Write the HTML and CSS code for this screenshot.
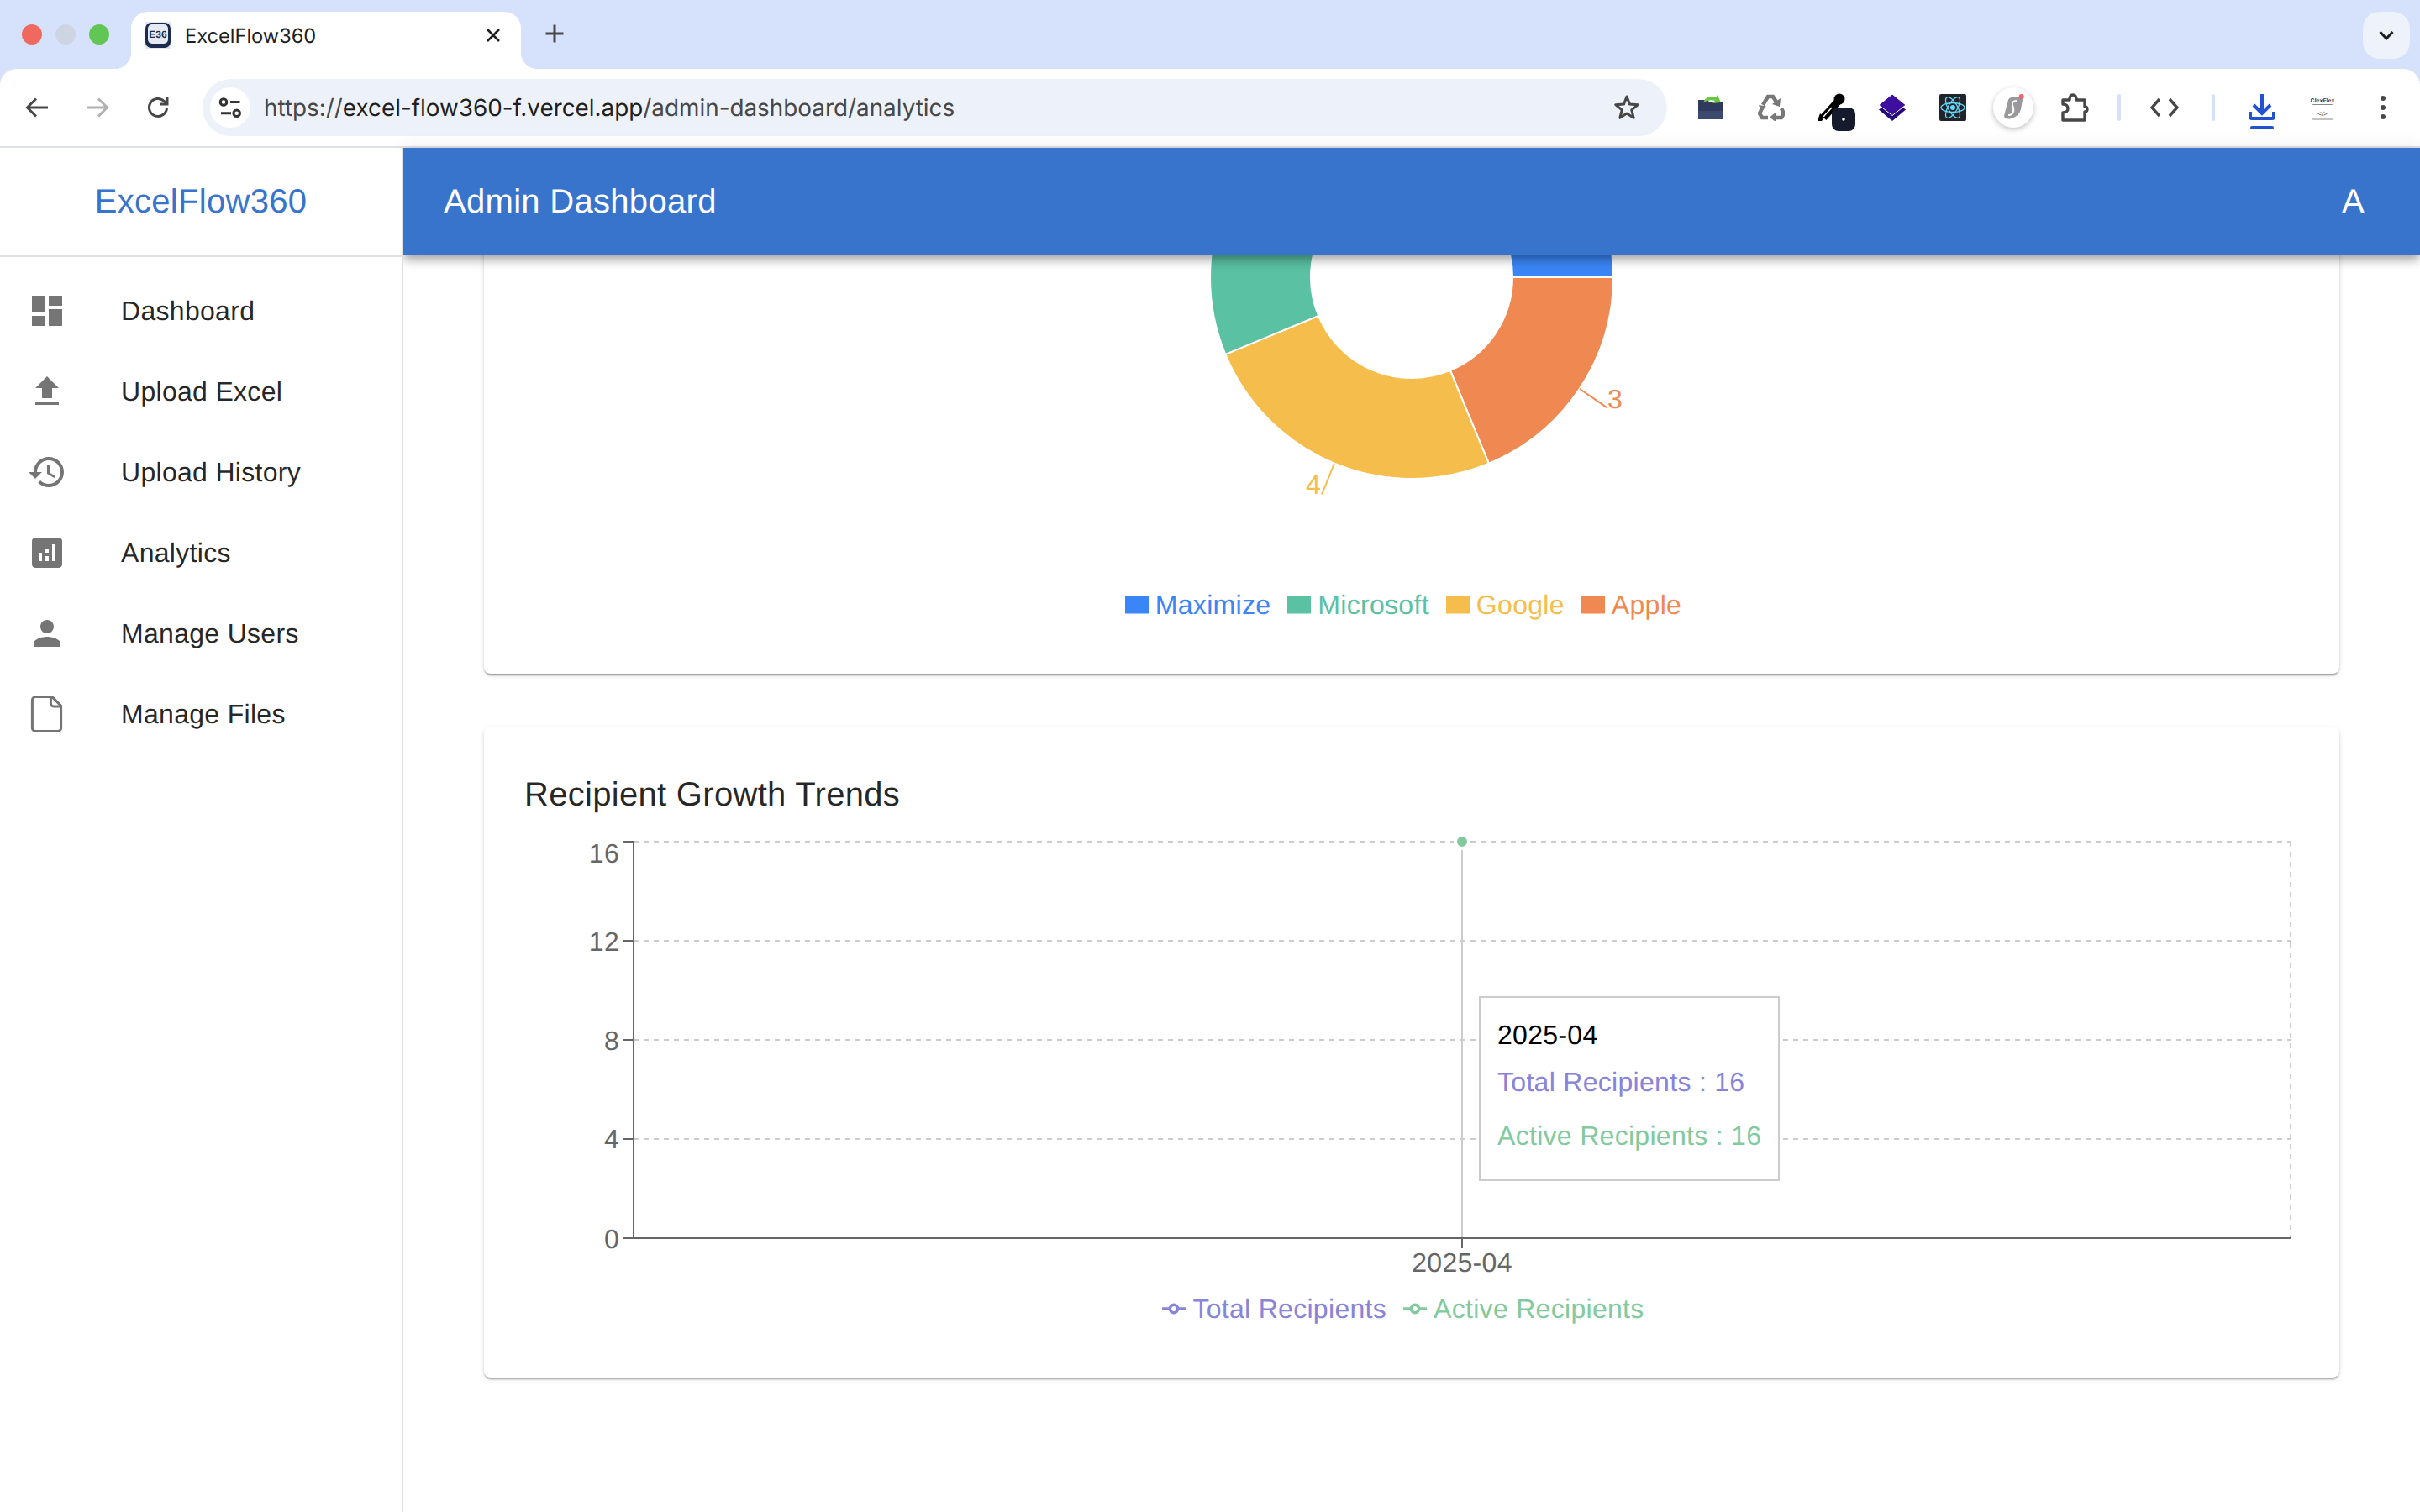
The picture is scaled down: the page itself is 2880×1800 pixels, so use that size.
FILE: index.html
```html
<!DOCTYPE html>
<html>
<head>
  <title>ExcelFlow360</title>
  <link rel="stylesheet" href="styles.css">
</head>
<body>
  <!-- browser frame -->
  <div class="browser">
    <div class="tabstrip">
      <div class="lights">
        <span class="light light-red"></span>
        <span class="light light-grey"></span>
        <span class="light light-green"></span>
      </div>
      <div class="tab">
        <svg class="favicon" width="32" height="32" viewBox="0 0 32 32">
          <rect width="32" height="32" fill="#e4e8ee"/>
          <rect x="1" y="1" width="30" height="30" rx="7" fill="#1d2b4f"/>
          <rect x="4" y="3" width="24" height="23" rx="5" fill="#e6ebf3"/>
          <text x="16" y="19" text-anchor="middle" class="favicon-text">E36</text>
        </svg>
        <span class="tab-title">ExcelFlow360</span>
        <svg class="tab-close" width="18" height="18" viewBox="0 0 18 18"><path d="M2 2 16 16M16 2 2 16" stroke="#1f1f1f" stroke-width="2.6" fill="none"/></svg>
      </div>
      <svg class="new-tab" width="24" height="24" viewBox="0 0 24 24"><path d="M12 1.500v21M1.500 12h21" stroke="#474747" stroke-width="3" fill="none"/></svg>
      <div class="tab-menu">
        <svg width="18" height="12" viewBox="0 0 18 12"><path d="M1.500 2 9 10l7.500-8" stroke="#1f1f1f" stroke-width="3" fill="none"/></svg>
      </div>
    </div>

    <div class="toolbar">
      <div class="slot">
        <svg width="32" height="32" viewBox="0 0 32 32"><path d="M29 16H5M15 5.500 4.500 16 15 26.500" stroke="#474747" stroke-width="3" fill="none"/></svg>
      </div>
      <div class="slot">
        <svg width="32" height="32" viewBox="0 0 32 32"><path d="M3 16h24M17 5.500 27.500 16 17 26.500" stroke="#b1b1b1" stroke-width="3" fill="none"/></svg>
      </div>
      <div class="slot">
        <svg width="32" height="32" viewBox="0 0 32 32"><path d="M26.500 16a10.500 10.500 0 1 1-3.100-7.500l3.600 3.500M27 4v8h-8" stroke="#474747" stroke-width="3" fill="none"/></svg>
      </div>

      <div class="omnibox">
        <div class="site-info">
          <svg width="48" height="48" viewBox="0 0 48 48">
            <circle cx="16" cy="17.500" r="3.800" fill="none" stroke="#333" stroke-width="3"/>
            <path d="M24 17.500h11.500M13 30.700h12" stroke="#333" stroke-width="3" fill="none"/>
            <circle cx="31.700" cy="30.700" r="3.800" fill="none" stroke="#333" stroke-width="3"/>
          </svg>
        </div>
        <div class="url"><span class="url-soft">https://</span>excel-flow360-f.vercel.app<span class="url-soft">/admin-dashboard/analytics</span></div>
        <svg class="star" width="32" height="32" viewBox="0 0 32 32"><path d="M16 3l3.500 9.100 9.800.6-7.600 6.200 2.500 9.400L16 23l-8.200 5.300 2.500-9.400-7.600-6.200 9.800-.6z" stroke="#474747" stroke-width="3" fill="none" stroke-linejoin="round"/></svg>
      </div>

      <div class="slot">
        <svg width="32" height="32" viewBox="0 0 32 32">
          <path d="M1 7h11l3 3h16v20H1z" fill="#2f3a5e"/>
          <path d="M1 20h30v10H1z" fill="#3d4a70"/>
          <path d="M7 10c2-6 9-9 15-6l2-3 4 9-10 1 3-3c-5-2-9 0-14 2z" fill="#6cc644"/>
        </svg>
      </div>
      <div class="slot">
        <svg class="blurred" width="32" height="32" viewBox="0 0 32 32">
          <path d="M6 13 12 3h6l5 8M28 17l3 6-3 5h-8M12 28H5l-3-5 4-8" stroke="#777" stroke-width="4.500" fill="none"/>
          <path d="M27 5l-1 10-9-3zM21 22v11l-7-5.500zM1 13l9 1.500L4 21z" fill="#777"/>
        </svg>
      </div>
      <div class="slot">
        <svg class="slot-tall" width="72" height="56" viewBox="0 0 72 56">
          <path d="M26 40 44 20" stroke="#000" stroke-width="9" fill="none"/>
          <path d="M26 39 36 28" stroke="#fff" stroke-width="1.500" fill="none"/>
          <path d="M22 35l5 5-3 4h-5z" fill="#000"/>
          <circle cx="45" cy="18" r="6.500" fill="#000"/>
          <rect x="36" y="28" width="28" height="28" rx="8" fill="#141b2d"/>
          <circle cx="50" cy="42" r="1.800" fill="#fff"/>
        </svg>
      </div>
      <div class="slot">
        <svg width="32" height="32" viewBox="0 0 32 32">
          <path d="M0 18.500 16 32l16-13.500L16 6z" fill="#230a78"/>
          <path d="M16 0l16 13-16 12.500L0 13z" fill="#3e0e9e" stroke="#fff" stroke-width="1"/>
        </svg>
      </div>
      <div class="slot">
        <svg width="32" height="32" viewBox="0 0 32 32">
          <rect width="32" height="32" rx="2" fill="#20232a"/>
          <g fill="none" stroke="#61dafb" stroke-width="1.300">
            <ellipse cx="16" cy="16" rx="14" ry="5.500"/>
            <ellipse cx="16" cy="16" rx="14" ry="5.500" transform="rotate(60 16 16)"/>
            <ellipse cx="16" cy="16" rx="14" ry="5.500" transform="rotate(120 16 16)"/>
          </g>
          <circle cx="16" cy="16" r="3" fill="#61dafb"/>
        </svg>
      </div>
      <div class="slot">
        <div class="pinned">
          <svg width="48" height="48" viewBox="0 0 48 48">
            <path d="M18 15q1-3 5-3h10q2 0 2 3l-2 11q-2 8-11 11-8 2-9-3z" fill="#98989d"/>
            <path d="M28 16q-6 0-5 5 2 5 1 8-1 4-6 4" stroke="#fff" stroke-width="2" fill="none"/>
            <circle cx="33.700" cy="11" r="3" fill="#f1606a"/>
          </svg>
        </div>
      </div>
      <div class="slot">
        <svg width="36" height="36" viewBox="0 0 36 36">
          <path d="M5 9h8q0-6 4-6t4 6h10v8q3 0 3 3t-3 3v10H5v-9q6 0 6-5t-6-5z" stroke="#474747" stroke-width="3.400" fill="none" stroke-linejoin="round"/>
        </svg>
      </div>
      <span class="sep"></span>
      <div class="slot">
        <svg width="34" height="24" viewBox="0 0 34 24"><path d="M11 2 2 12l9 10M23 2l9 10-9 10" stroke="#474747" stroke-width="3.400" fill="none"/></svg>
      </div>
      <span class="sep sep-wide"></span>
      <div class="slot">
        <svg class="slot-tall" width="32" height="56" viewBox="0 0 32 56">
          <path d="M16 12v22M6 25l10 10 10-10M2 33v6q0 2 2 2h24q2 0 2-2v-6" stroke="#2352d0" stroke-width="4" fill="none"/>
          <rect x="2" y="50" width="28" height="4" rx="2" fill="#2352d0"/>
        </svg>
      </div>
      <div class="slot">
        <svg width="28" height="32" viewBox="0 0 28 32">
          <text x="14" y="10" text-anchor="middle" class="clex-title">ClexFlex</text>
          <rect x="1.500" y="12.500" width="25" height="17.500" rx="1" fill="#fff" stroke="#888"/>
          <path d="M2 16.500h24" stroke="#888"/>
          <text x="14" y="26" text-anchor="middle" class="clex-code">&lt;/&gt;</text>
        </svg>
      </div>
      <div class="slot">
        <svg width="8" height="32" viewBox="0 0 8 32">
          <circle cx="4" cy="5" r="3" fill="#474747"/>
          <circle cx="4" cy="16" r="3" fill="#474747"/>
          <circle cx="4" cy="27" r="3" fill="#474747"/>
        </svg>
      </div>
    </div>
  </div>

  <div class="app">
    <div class="sidebar">
      <div class="logo">ExcelFlow360</div>
      <ul class="nav">
        <li class="nav-item">
          <span class="nav-icon"><svg width="48" height="48" viewBox="0 0 24 24"><path d="M3 13h8V3H3v10zm0 8h8v-6H3v6zm10 0h8V11h-8v10zm0-18v6h8V3h-8z"/></svg></span>
          Dashboard
        </li>
        <li class="nav-item">
          <span class="nav-icon"><svg width="48" height="48" viewBox="0 0 24 24"><path d="M5 20h14v-2H5v2zm0-10h4v6h6v-6h4l-7-7-7 7z"/></svg></span>
          Upload Excel
        </li>
        <li class="nav-item">
          <span class="nav-icon"><svg width="48" height="48" viewBox="0 0 24 24"><path d="M13 3c-4.970 0-9 4.030-9 9H1l3.890 3.890.07.14L9 12H6c0-3.870 3.130-7 7-7s7 3.130 7 7-3.130 7-7 7c-1.930 0-3.680-.79-4.940-2.060l-1.420 1.420C8.270 19.990 10.510 21 13 21c4.970 0 9-4.030 9-9s-4.030-9-9-9zm-1 5v5l4.280 2.540.72-1.210-3.500-2.080V8H12z"/></svg></span>
          Upload History
        </li>
        <li class="nav-item">
          <span class="nav-icon"><svg width="48" height="48" viewBox="0 0 24 24"><path d="M19 3H5c-1.100 0-2 .9-2 2v14c0 1.100.9 2 2 2h14c1.100 0 2-.9 2-2V5c0-1.100-.9-2-2-2zM9 17H7v-5h2v5zm4 0h-2v-3h2v3zm0-5h-2v-2h2v2zm4 5h-2V7h2v10z"/></svg></span>
          Analytics
        </li>
        <li class="nav-item">
          <span class="nav-icon"><svg width="48" height="48" viewBox="0 0 24 24"><path d="M12 12c2.210 0 4-1.790 4-4s-1.790-4-4-4-4 1.790-4 4 1.790 4 4 4zm0 2c-2.670 0-8 1.340-8 4v2h16v-2c0-2.660-5.330-4-8-4z"/></svg></span>
          Manage Users
        </li>
        <li class="nav-item">
          <span class="nav-icon"><svg width="48" height="48" viewBox="0 0 24 24"><path class="file-line" d="M5.200 1.800h9.800l5.300 5.300v13.100a2 2 0 0 1-2 2H5.200a2 2 0 0 1-2-2V3.800a2 2 0 0 1 2-2z"/><path class="file-line" d="M14.200 2v3.800a1.700 1.700 0 0 0 1.700 1.700h4.200"/></svg></span>
          Manage Files
        </li>
      </ul>
    </div>

    <div class="content">
      <div class="appbar">
        <span class="appbar-title">Admin Dashboard</span>
        <span class="appbar-title">A</span>
      </div>

      <div class="scroll">
        <div class="scroll-inner">
          <div class="card">
            <div class="chart">
              <svg width="2112" height="800" viewBox="0 0 2112 800">
                <g stroke="#fff" stroke-width="2">
                  <path fill="#f08951" d="M1296 376A240 240 0 0 1 1147.800 597.700L1101.900 486.900A120 120 0 0 0 1176 376Z"/>
                  <path fill="#f5bd4b" d="M1147.800 597.700A240 240 0 0 1 834.300 467.800L945.100 421.900A120 120 0 0 0 1101.900 486.900Z"/>
                  <path fill="#5ac1a3" d="M834.300 467.800A240 240 0 0 1 1056 136L1056 256A120 120 0 0 0 945.100 421.900Z"/>
                  <path fill="#3b86f6" d="M1056 136A240 240 0 0 1 1296 376L1176 376A120 120 0 0 0 1056 256Z"/>
                </g>
                <path d="M1256 509 1289 531.600" stroke="#f08951" stroke-width="2" fill="none"/>
                <text x="1289" y="532" class="pie-label" fill="#f08951">3</text>
                <path d="M964 597.700 949 634.700" stroke="#f5bd4b" stroke-width="2" fill="none"/>
                <text x="948" y="634" text-anchor="end" class="pie-label" fill="#f5bd4b">4</text>
              </svg>
              <div class="legend">
                <div class="legend-item legend-blue"><svg class="legend-icon" viewBox="0 0 32 32"><path d="M0 4h32v24H0z" fill="currentColor"/></svg>Maximize</div>
                <div class="legend-item legend-teal"><svg class="legend-icon" viewBox="0 0 32 32"><path d="M0 4h32v24H0z" fill="currentColor"/></svg>Microsoft</div>
                <div class="legend-item legend-yellow"><svg class="legend-icon" viewBox="0 0 32 32"><path d="M0 4h32v24H0z" fill="currentColor"/></svg>Google</div>
                <div class="legend-item legend-orange"><svg class="legend-icon" viewBox="0 0 32 32"><path d="M0 4h32v24H0z" fill="currentColor"/></svg>Apple</div>
              </div>
            </div>
          </div>

          <div class="card">
            <h6 class="card-title">Recipient Growth Trends</h6>
            <div class="chart">
              <svg width="2112" height="600" viewBox="0 0 2112 600" class="chart-trends">
                <g stroke="#ccc" stroke-width="2" stroke-dasharray="6 6" fill="none">
                  <path d="M130 10H2102"/>
                  <path d="M130 128H2102"/>
                  <path d="M130 246H2102"/>
                  <path d="M130 364H2102"/>
                  <path d="M2102 10V482"/>
                </g>
                <path d="M1116 10V482" stroke="#ccc" stroke-width="2"/>
                <g stroke="#666" stroke-width="2" fill="none">
                  <path d="M118 10H130V482H2102"/>
                  <path d="M118 128H130M118 246H130M118 364H130M118 482H130"/>
                  <path d="M1116 482V494"/>
                </g>
                <g class="tick" text-anchor="end">
                  <text x="113" y="35">16</text>
                  <text x="113" y="139.500">12</text>
                  <text x="113" y="258">8</text>
                  <text x="113" y="375">4</text>
                  <text x="113" y="493.500">0</text>
                </g>
                <text x="1116" y="521.500" text-anchor="middle" class="tick">2025-04</text>
                <circle cx="1116" cy="10" r="8" fill="#82ca9d" stroke="#fff" stroke-width="4"/>
              </svg>
              <div class="legend">
                <div class="legend-item legend-purple"><svg class="legend-icon" viewBox="0 0 32 32"><path d="M0 16h10.670A5.330 5.330 0 1 1 21.330 16H32M21.330 16A5.330 5.330 0 1 1 10.670 16" fill="none" stroke="currentColor" stroke-width="4"/></svg>Total Recipients</div>
                <div class="legend-item legend-green"><svg class="legend-icon" viewBox="0 0 32 32"><path d="M0 16h10.670A5.330 5.330 0 1 1 21.330 16H32M21.330 16A5.330 5.330 0 1 1 10.670 16" fill="none" stroke="currentColor" stroke-width="4"/></svg>Active Recipients</div>
              </div>
              <div class="tooltip">
                <p class="tooltip-label">2025-04</p>
                <p class="tooltip-row legend-purple">Total Recipients : 16</p>
                <p class="tooltip-row legend-green">Active Recipients : 16</p>
              </div>
            </div>
          </div>
        </div>
      </div>
    </div>
  </div>
</body>
</html>
```

FILE: styles.css
```css
* {
  box-sizing: border-box;
}

html, body {
  margin: 0;
  height: 1800px;
  overflow: hidden;
  background: #fff;
  font-family: "Liberation Sans", Arial, sans-serif;
  text-rendering: geometricPrecision;
}

svg {
  display: block;
  flex: none;
}

/* browser frame */
.browser {
  background: #d6e2fb;
  font-family: Inter, "Liberation Sans", sans-serif;
}

.tabstrip {
  height: 82px;
  display: flex;
  align-items: flex-end;
}

.lights {
  display: flex;
  gap: 16px;
  margin-left: 26px;
  align-self: flex-start;
  margin-top: 29px;
}

.light {
  width: 24px;
  height: 24px;
  border-radius: 50%;
}

.light-red { background: #f0695f; }
.light-grey { background: #ced5e2; }
.light-green { background: #62c655; }

.tab {
  position: relative;
  width: 464px;
  height: 68px;
  margin-left: 26px;
  padding: 0 24px 12px 16px;
  display: flex;
  align-items: center;
  background: #fff;
  border-radius: 20px 20px 0 0;
}

.tab::before,
.tab::after {
  content: "";
  position: absolute;
  bottom: 0;
  width: 20px;
  height: 20px;
}

.tab::before {
  left: -20px;
  background: radial-gradient(circle at 0 0, transparent 20px, #fff 20.5px);
}

.tab::after {
  right: -20px;
  background: radial-gradient(circle at 100% 0, transparent 20px, #fff 20.5px);
}

.favicon-text {
  font: bold 12px "Liberation Sans", sans-serif;
  fill: #1d2b4f;
}

.tab-title {
  margin-left: 16px;
  font-size: 23.6px;
  color: #1f1f1f;
}

.tab-close {
  margin-left: auto;
}

.new-tab {
  margin: 0 0 30px 28px;
}

.tab-menu {
  width: 56px;
  height: 56px;
  margin: 0 12px 12px auto;
  border-radius: 20px;
  background: #edf2fb;
  display: flex;
  align-items: center;
  justify-content: center;
}

.toolbar {
  height: 94px;
  padding: 0 8px;
  display: flex;
  align-items: center;
  background: #fff;
  border-radius: 20px 20px 0 0;
  border-bottom: 2px solid #dfe3e8;
}

.slot {
  width: 72px;
  height: 72px;
  flex: none;
  display: flex;
  align-items: center;
  justify-content: center;
}

.blurred {
  filter: blur(0.6px);
}

.pinned {
  width: 48px;
  height: 48px;
  border-radius: 50%;
  background: #fff;
  box-shadow: 0 2px 6px rgba(0, 0, 0, .25);
}

.omnibox {
  flex: 1;
  height: 68px;
  margin: 0 16px 0 17px;
  padding: 0 32px 0 9px;
  display: flex;
  align-items: center;
  border-radius: 34px;
  background: #edf2fa;
}

.site-info {
  width: 48px;
  height: 48px;
  border-radius: 50%;
  background: #fff;
}

.url {
  margin-left: 16px;
  font-size: 27.85px;
  color: #1f1f1f;
  white-space: nowrap;
}

.url-soft {
  color: #474747;
}

.star {
  margin-left: auto;
}

.sep {
  width: 4px;
  height: 32px;
  margin: 0 16px;
  flex: none;
  border-radius: 2px;
  background: #d6e2fb;
}

.sep-wide {
  margin: 0 20px;
}

.clex-title {
  font: bold 7px "Liberation Sans", sans-serif;
  fill: #333;
}

.clex-code {
  font: 8px "Liberation Sans", sans-serif;
  fill: #555;
}

/* app */
.app {
  display: flex;
  height: 1624px;
  letter-spacing: .3px;
}

.sidebar {
  position: relative;
  z-index: 2;
  width: 480px;
  flex: none;
  background: #fff;
  border-right: 2px solid #e0e0e0;
}

.logo {
  height: 130px;
  display: flex;
  align-items: center;
  justify-content: center;
  border-bottom: 2px solid #e0e0e0;
  font-size: 40px;
  color: #3874cb;
}

.nav {
  list-style: none;
  margin: 0;
  padding: 16px 0;
}

.nav-item {
  height: 96px;
  padding-left: 32px;
  display: flex;
  align-items: center;
  font-size: 32px;
  color: rgba(0, 0, 0, .87);
}

.nav-icon {
  width: 112px;
  flex: none;
  fill: #757575;
}

.nav-icon .file-line {
  fill: none;
  stroke: #757575;
  stroke-width: 1.5;
}

.content {
  flex: 1;
  min-width: 0;
}

.appbar {
  position: relative;
  z-index: 1;
  height: 128px;
  padding: 0 66px 0 48px;
  display: flex;
  align-items: center;
  justify-content: space-between;
  background: #3874cb;
  box-shadow: 0 4px 8px -2px rgba(0, 0, 0, .2), 0 8px 10px 0 rgba(0, 0, 0, .14), 0 2px 20px 0 rgba(0, 0, 0, .12);
}

.appbar-title {
  font-size: 40px;
  color: #fff;
}

.scroll {
  height: 1496px;
  overflow: hidden;
}

/* the page is scrolled down, so the first card starts above the bar */
.scroll-inner {
  margin-top: -398px;
  padding: 0 96px;
}

.card {
  padding: 48px;
  margin-bottom: 64px;
  background: #fff;
  border-radius: 8px;
  box-shadow: 0 4px 2px -2px rgba(0, 0, 0, .2), 0 2px 2px 0 rgba(0, 0, 0, .14), 0 2px 6px 0 rgba(0, 0, 0, .12);
}

.card-title {
  margin: 0;
  font-size: 40px;
  font-weight: 400;
  line-height: 64px;
  color: rgba(0, 0, 0, .87);
}

.chart {
  position: relative;
}

.chart-trends {
  margin-top: 14px;
}

.pie-label {
  font-size: 32px;
}

.tick,
.tick text {
  font-size: 32px;
  fill: #666;
}

.legend {
  position: absolute;
  left: 0;
  right: 0;
  bottom: 10px;
  display: flex;
  justify-content: center;
  font-size: 32px;
  line-height: 48px;
}

.legend-item {
  margin-right: 20px;
  display: flex;
  align-items: center;
}

.legend-icon {
  width: 28px;
  height: 28px;
  margin-right: 8px;
}

.legend-blue { color: #3b86f6; }
.legend-teal { color: #5ac1a3; }
.legend-yellow { color: #f5bd4b; }
.legend-orange { color: #f08951; }
.legend-purple { color: #8884d8; }
.legend-green { color: #82ca9d; }

.tooltip {
  position: absolute;
  left: 1136px;
  top: 194px;
  padding: 20px;
  background: #fff;
  border: 2px solid #ccc;
  font-size: 32px;
  line-height: 48px;
  white-space: nowrap;
}

.tooltip p {
  margin: 0;
}

.tooltip-row {
  padding: 8px 0;
}
```
